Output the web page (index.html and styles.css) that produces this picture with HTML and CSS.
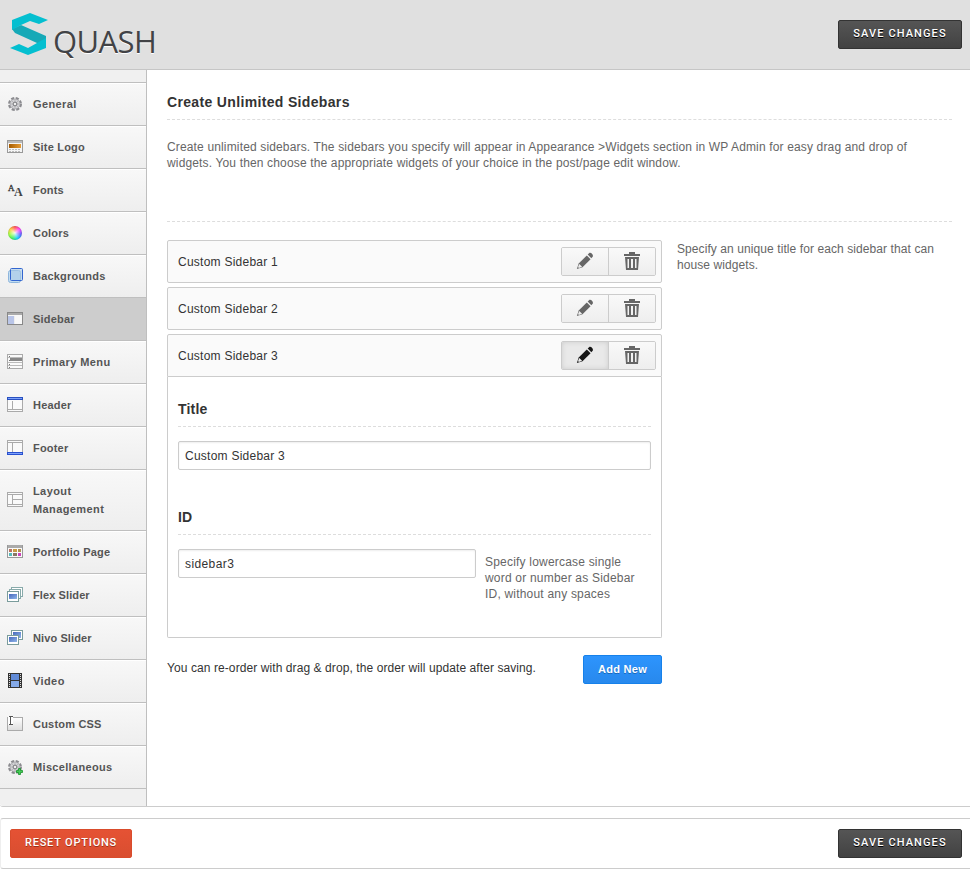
FILE: index.html
```html
<!DOCTYPE html>
<html lang="en">
<head>
<meta charset="utf-8">
<title>Squash Options</title>
<link rel="stylesheet" href="styles.css">
</head>
<body>
<svg width="0" height="0" class="defs" aria-hidden="true">
<defs>
<linearGradient id="g" x1="0" y1="0" x2="0" y2="1"><stop offset="0" stop-color="#fff"/><stop offset="1" stop-color="#ddd"/></linearGradient>
<linearGradient id="o" x1="0" y1="0" x2="1" y2="0"><stop offset="0" stop-color="#a65b00"/><stop offset="1" stop-color="#e69c35"/></linearGradient>
<linearGradient id="b" x1="0" y1="0" x2="1" y2="1"><stop offset="0" stop-color="#4768bd"/><stop offset="1" stop-color="#91b6e9"/></linearGradient>
<symbol id="gear" viewBox="0 0 16 16"><circle cx="8" cy="8" r="5.700" fill="none" stroke="#8b8b8f" stroke-width="2.600" stroke-dasharray="3 1.480"/><circle cx="8" cy="8" r="5" fill="#d2d2d5" stroke="#99999d" stroke-width=".6"/><path d="M8 3v10M3 8h10M4.500 4.500l7 7M11.500 4.500l-7 7" stroke="#b0b0b4" stroke-width=".8"/><circle cx="8" cy="8" r="1.900" fill="#eee" stroke="#77777b"/></symbol>
<symbol id="pencil" viewBox="0 0 20 20"><path d="M1 19l2-6.200 9-9 4.200 4.200-9 9z" /><path d="M13 2.800l1.500-1.500c1.800-1.500 5.400 1.800 4 4L17 7z"/><path d="M3.600 13.200l3.200 3.200-3.600 1.300-.9-.9z" fill="#eee"/></symbol>
<symbol id="trash" viewBox="0 0 16 18"><path fill-rule="evenodd" d="M5 0h6v2h5v2H0V2h5zM1 5h14l-1 13H2zM3.500 7v9H5V7zM7 7v9h2V7zM11 7v9h1.500V7z"/></symbol>
</defs>
</svg>
<header class="top">
<div class="logo">
<svg class="mark" width="38" height="42" viewBox="0 0 38 42"><path fill="#16a9b7" d="M2 16L11 12l25 11v12l-9-5L5 20z"/><path fill="#04bfd0" d="M2 7L20 0l18 7-9 4-9-3-9 4-9 5zM0 35l9-4 9 4 9-5 9-5v10L18 42z"/></svg>
<span class="word">QUASH</span>
</div>
<button class="btn dark">SAVE CHANGES</button>
</header>
<div class="body">
<nav class="nav">
<ul>
<li><svg class="ico" viewBox="0 0 16 16"><use href="#gear"/></svg><span class="wide">General</span></li>
<li><svg class="ico crisp" viewBox="0 0 16 16"><path fill="#f5f5f5" stroke="#999" d="M.5 1.500h15v12H.5z"/><path fill="#bbb" d="M1 2h14v2H1z"/><path fill="url(#o)" d="M2 5h12v4H2z"/><path stroke="#bbb" stroke-dasharray="2 1" d="M2 10.500h12M2 12.500h12"/></svg><span>Site Logo</span></li>
<li><svg class="ico" viewBox="0 0 16 16"><text x="1" y="9" class="letter-a">A</text><text x="7" y="14" class="letter-b">A</text></svg><span>Fonts</span></li>
<li><span class="wheel"></span><span>Colors</span></li>
<li><svg class="ico" viewBox="0 0 16 16"><rect x="1.500" y="2.500" width="12" height="12" rx="2" fill="#c3ddf0" stroke="#8db5dc"/><rect x="3.500" y=".5" width="12" height="12" rx="1" fill="#a9cce8" fill-opacity=".6" stroke="#3366d0"/></svg><span>Backgrounds</span></li>
<li class="on"><svg class="ico crisp" viewBox="0 0 16 16"><path fill="#f8f8f8" stroke="#888" d="M.5 1.500h15v12H.5z"/><path fill="#aaa" d="M1 2h14v2H1z"/><path fill="#b9c5e8" d="M1 5h6v8H1z"/><path fill="#eee" d="M7 5h1v8H7z"/></svg><span>Sidebar</span></li>
<li><svg class="ico crisp" viewBox="0 0 16 16"><path fill="#fafafa" stroke="#aaa" d="M.5.500h15v14H.5z"/><path fill="#888" d="M3 4h12v3H3z"/><path stroke="#bbb" d="M1 3.500h14M1 8.500h14M1 11.500h14"/><path stroke="#777" d="M2 2.500h1M2 6.500h1M2 10.500h1M2 13.500h1"/></svg><span class="wide">Primary Menu</span></li>
<li><svg class="ico crisp" viewBox="0 0 16 16"><path fill="#fafafa" stroke="#aaa" d="M.5.500h15v14H.5zM5.500 4v8M1 12.500h14"/><path fill="#2850c0" d="M0 0h16v3H0z"/><path stroke="#7da1fa" d="M1 1.500h14"/></svg><span>Header</span></li>
<li><svg class="ico crisp" viewBox="0 0 16 16"><path fill="#fafafa" stroke="#aaa" d="M.5.500h15v14H.5zM5.500 3v9M1 2.500h14"/><path fill="#2850d0" d="M0 12h16v3H0z"/><path stroke="#7da1fa" d="M1 13.500h14"/></svg><span>Footer</span></li>
<li><svg class="ico crisp" viewBox="0 0 16 16"><path fill="#fafafa" stroke="#aaa" d="M.5.500h15v14H.5zM5.500 3v9M1 2.500h14M6 7.500h9M1 12.500h14"/></svg><span class="wide">Layout<br>Management</span></li>
<li><svg class="ico crisp" viewBox="0 0 16 16"><path fill="#fafafa" stroke="#999" d="M.5 1.500h15v12H.5z"/><path fill="#aaa" d="M1 1h14v3H1z"/><path fill="#b87462" d="M2 5h3v3H2z"/><path fill="#c99a44" d="M6 5h4v3H6z"/><path fill="#b08e50" d="M11 5h3v3h-3z"/><path fill="#5bb" d="M2 9h3v3H2z"/><path fill="#876" d="M6 9h4v3H6z"/><path fill="#c4b" d="M11 9h3v3h-3z"/></svg><span>Portfolio Page</span></li>
<li><svg class="ico crisp" viewBox="0 0 16 16"><path fill="#fff" stroke="#8aa" d="M4.500.500h11v9h-11z"/><path fill="#fff" stroke="#8aa" d="M2.500 2.500h11v9h-11z"/><path fill="#fff" stroke="#7a9c9c" d="M.5 4.500h11v10H.5z"/><path fill="url(#b)" d="M2 7h8v5H2z"/></svg><span class="tight">Flex Slider</span></li>
<li><svg class="ico crisp" viewBox="0 0 16 16"><path fill="#fff" stroke="#7a9c9c" d="M4.500.500h11v9h-11z"/><path fill="url(#b)" d="M6 2h8v6H6z"/><path fill="#fff" stroke="#7a9c9c" d="M.5 5.500h11v9H.5z"/><path fill="url(#b)" d="M2 7h8v5H2z"/></svg><span class="tight">Nivo Slider</span></li>
<li><svg class="ico crisp" viewBox="0 0 16 16"><path fill="#333" d="M1 0h14v15H1z"/><path fill="#618bd8" d="M4 1h8v6H4z"/><path fill="#84a9e8" d="M4 8h8v6H4z"/><path stroke="#ddd" stroke-dasharray="1 1" d="M2.500 1v13M13.500 1v13"/></svg><span class="wide">Video</span></li>
<li><svg class="ico crisp" viewBox="0 0 16 16"><path fill="url(#g)" stroke="#aaa" d="M.5 1.500h15v13H.5z"/><path fill="#fff" d="M1 0h5v9H1z"/><path stroke="#555" d="M2 .5h4M2 8.500h4M3.500 1v8"/></svg><span>Custom CSS</span></li>
<li><svg class="ico" viewBox="0 0 16 16"><use href="#gear"/><path fill="#4c5" stroke="#15902a" stroke-width=".8" d="M11.500 9.500h2v2h2v2h-2v2h-2v-2h-2v-2h2z"/></svg><span class="misc">Miscellaneous</span></li>
</ul>
</nav>
<main class="main">
<h2 class="title">Create Unlimited Sidebars</h2>
<p class="intro">Create unlimited sidebars. The sidebars you specify will appear in Appearance &gt;Widgets section in WP Admin for easy drag and drop of<br>widgets. You then choose the appropriate widgets of your choice in the post/page edit window.</p>
<div class="columns">
<section class="list">
<div class="row"><span>Custom Sidebar 1</span><div class="tools"><button><svg class="pen"><use href="#pencil"/></svg></button><button><svg class="bin"><use href="#trash"/></svg></button></div></div>
<div class="row"><span>Custom Sidebar 2</span><div class="tools"><button><svg class="pen"><use href="#pencil"/></svg></button><button><svg class="bin"><use href="#trash"/></svg></button></div></div>
<div class="row open"><span>Custom Sidebar 3</span><div class="tools"><button class="active"><svg class="pen"><use href="#pencil"/></svg></button><button><svg class="bin"><use href="#trash"/></svg></button></div></div>
<div class="editor">
<h3>Title</h3>
<input class="field" value="Custom Sidebar 3">
<h3 class="second">ID</h3>
<div class="pair"><input class="field short" value="sidebar3"><p>Specify lowercase single<br>word or number as Sidebar<br>ID, without any spaces</p></div>
</div>
<div class="below"><span>You can re-order with drag &amp; drop, the order will update after saving.</span><button class="add">Add New</button></div>
</section>
<p class="hint">Specify an unique title for each sidebar that can<br>house widgets.</p>
</div>
</main>
</div>
<footer class="bottom"><button class="btn red">RESET OPTIONS</button><button class="btn dark">SAVE CHANGES</button></footer>
</body>
</html>
```
FILE: styles.css
```css
* { box-sizing: border-box; }
body { margin: 0; background: #fff; font: 12px/16px "Liberation Sans", Arial, sans-serif; color: #333; }
h2, h3, p, ul { margin: 0; padding: 0; }
button, input { font-family: inherit; margin: 0; }
.defs { display: block; height: 0; }
.top { height: 70px; background: #e0e0e0; border-bottom: 1px solid #c6c6c6; display: flex; justify-content: space-between; padding: 13px 8px 0 10px; }
.logo { display: flex; gap: 5px; }
.word { font: 31px/40px "Open Sans", sans-serif; color: #424346; padding-top: 8px; letter-spacing: -.6px; text-shadow: 0 1px #fff; }
.btn { height: 29px; padding: 0 0 3px; border-radius: 2px; color: #fff; font: 500 11px Roboto, sans-serif; letter-spacing: 1.1px; white-space: nowrap; }
.dark { width: 124px; border: 1px solid #333; background: linear-gradient(#555, #424242); text-shadow: 0 1px #000; }
.top .dark { margin-top: 7px; }
.red { width: 122px; border: 1px solid #d94c2c; background: linear-gradient(#e55234, #d94e30); text-shadow: 0 1px #9b3018; letter-spacing: .8px; }
.body { height: 737px; display: flex; border-bottom: 1px solid #ccc; border-bottom-left-radius: 3px; }
.nav { width: 147px; background: #f0f0f0; border-right: 1px solid #bfbfbf; padding-top: 12px; border-bottom-left-radius: 3px; }
.nav ul { list-style: none; border-top: 1px solid #bfbfbf; }
.nav li { min-height: 43px; display: flex; align-items: center; gap: 10px; padding: 3px 0 3px 7px; border-bottom: 1px solid #bfbfbf; background: linear-gradient(#f8f8f8, #eee); box-shadow: inset 0 1px #fff; font-size: 11px; line-height: 18px; font-weight: 700; letter-spacing: .2px; color: #555; }
.nav li:nth-child(10) { height: 61px; }
.nav li.on { background: #cdcdcd; box-shadow: none; }
.wide { letter-spacing: .4px; }
.tight { letter-spacing: .1px; }
.misc { letter-spacing: .33px; }
.ico { width: 16px; height: 16px; flex: none; }
.crisp { shape-rendering: crispEdges; }
.letter-a { font: 9px "Liberation Serif", serif; fill: #333; stroke: #333; stroke-width: .3; }
.letter-b { font: bold 12px "Liberation Serif", serif; fill: #444; }
.wheel { width: 14px; height: 14px; margin: 0 1px; border-radius: 50%; background: radial-gradient(circle, rgba(255,255,255,.9), transparent 65%), conic-gradient(#f44, #f3f, #55f, #0cf, #3e5, #9f3, #fc3, #f44); box-shadow: inset 0 0 1px #777; }
.main { flex: 1; padding: 24px 18px 0 20px; }
.title { height: 26px; font-size: 14px; line-height: 17px; letter-spacing: .34px; border-bottom: 1px dashed #ddd; }
.intro { height: 102px; padding-top: 19px; border-bottom: 1px dashed #ddd; color: #666; letter-spacing: .15px; white-space: nowrap; }
.columns { display: flex; gap: 15px; padding-top: 18px; }
.list { width: 495px; flex: none; }
.row { height: 43px; margin-bottom: 4px; padding: 0 5px 0 10px; border: 1px solid #ccc; border-radius: 2px; background: #fafafa; display: flex; justify-content: space-between; align-items: center; letter-spacing: .25px; }
.row.open { margin: 0; border-radius: 2px 2px 0 0; }
.tools { display: flex; width: 95px; height: 29px; border: 1px solid #ccc; border-radius: 2px; overflow: hidden; }
.tools button { flex: 1; padding: 0 0 1px; border: 0; background: linear-gradient(#f9f9f9, #eee); display: flex; align-items: center; justify-content: center; color: #666; }
.tools button + button { border-left: 1px solid #ccc; }
.tools .active { background: #e9e9e9; color: #151515; box-shadow: inset 0 0 5px #ccc; }
.pen { width: 18px; height: 18px; fill: currentColor; }
.bin { width: 16px; height: 18px; fill: currentColor; }
.editor { height: 261px; padding: 24px 10px 0; border: 1px solid #ccc; border-top: 0; border-radius: 0 0 2px 2px; }
.editor h3 { height: 26px; margin-bottom: 14px; font-size: 14px; line-height: 17px; border-bottom: 1px dashed #ddd; letter-spacing: .2px; }
.editor h3.second { margin-top: 39px; }
.field { display: block; width: 473px; height: 29px; padding: 0 6px; border: 1px solid #ccc; border-radius: 2px; color: #333; font-size: 12px; letter-spacing: .25px; box-shadow: inset 0 1px 2px #eee; }
.pair { display: flex; gap: 9px; color: #666; }
.short { width: 298px; flex: none; letter-spacing: .4px; }
.pair p { padding-top: 5px; white-space: nowrap; letter-spacing: .2px; }
.below { display: flex; justify-content: space-between; padding-top: 17px; line-height: 26px; letter-spacing: .085px; }
.add { width: 79px; height: 29px; padding: 0 0 2px; color: #fff; font-size: 11px; font-weight: 700; letter-spacing: .3px; border: 1px solid #1681ea; border-radius: 2px; background: linear-gradient(#2d94fd, #2889ed); text-shadow: 0 1px #1768bb; }
.hint { color: #666; white-space: nowrap; padding-top: 1px; letter-spacing: .085px; }
.bottom { height: 51px; margin-top: 11px; border: 1px solid #ccc; border-right: 0; border-left-color: #eee; border-radius: 3px 0 0 3px; padding: 10px 8px 0 9px; display: flex; justify-content: space-between; }
```
